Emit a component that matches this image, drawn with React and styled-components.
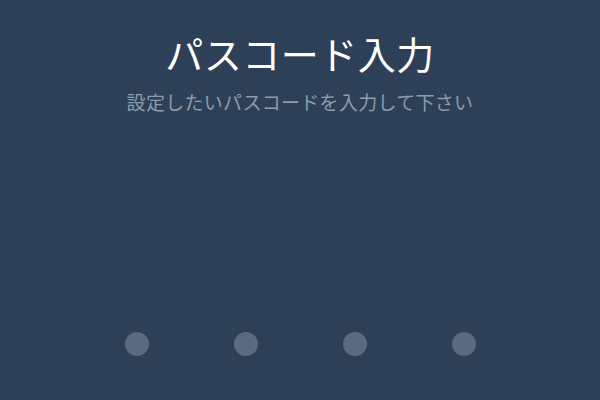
import React from "react";
import styled, { createGlobalStyle } from "styled-components";

const Global = createGlobalStyle`
  html, body {
    margin: 0;
    padding: 0;
    background: #2e4058;
  }
  body {
    font-family: "Noto Sans CJK JP", "Noto Sans", sans-serif;
  }
`;

const Screen = styled.div`
  width: 600px;
  height: 400px;
  background: #2e4058;
  display: flex;
  flex-direction: column;
  align-items: center;
  overflow: hidden;
`;

const Title = styled.h1`
  margin: 27px 0 0;
  font-size: 38px;
  font-weight: 400;
  line-height: 52px;
  color: #ffffff;
  letter-spacing: 0.5px;
`;

const Subtitle = styled.p`
  margin: 10px 0 0;
  font-size: 19px;
  font-weight: 400;
  line-height: 26px;
  color: #8e9bab;
  letter-spacing: 0.3px;
`;

const Dots = styled.div`
  margin-top: 217px;
  display: flex;
  gap: 85px;
`;

const Dot = styled.span`
  width: 24px;
  height: 24px;
  border-radius: 50%;
  background: ${({ filled }) => (filled ? "#ffffff" : "#5a6b80")};
`;

export default function App() {
  return (
    <>
      <Global />
      <Screen>
        <Title>パスコード入力</Title>
        <Subtitle>設定したいパスコードを入力して下さい</Subtitle>
        <Dots>
          {[0, 1, 2, 3].map((i) => (
            <Dot key={i} />
          ))}
        </Dots>
      </Screen>
    </>
  );
}
